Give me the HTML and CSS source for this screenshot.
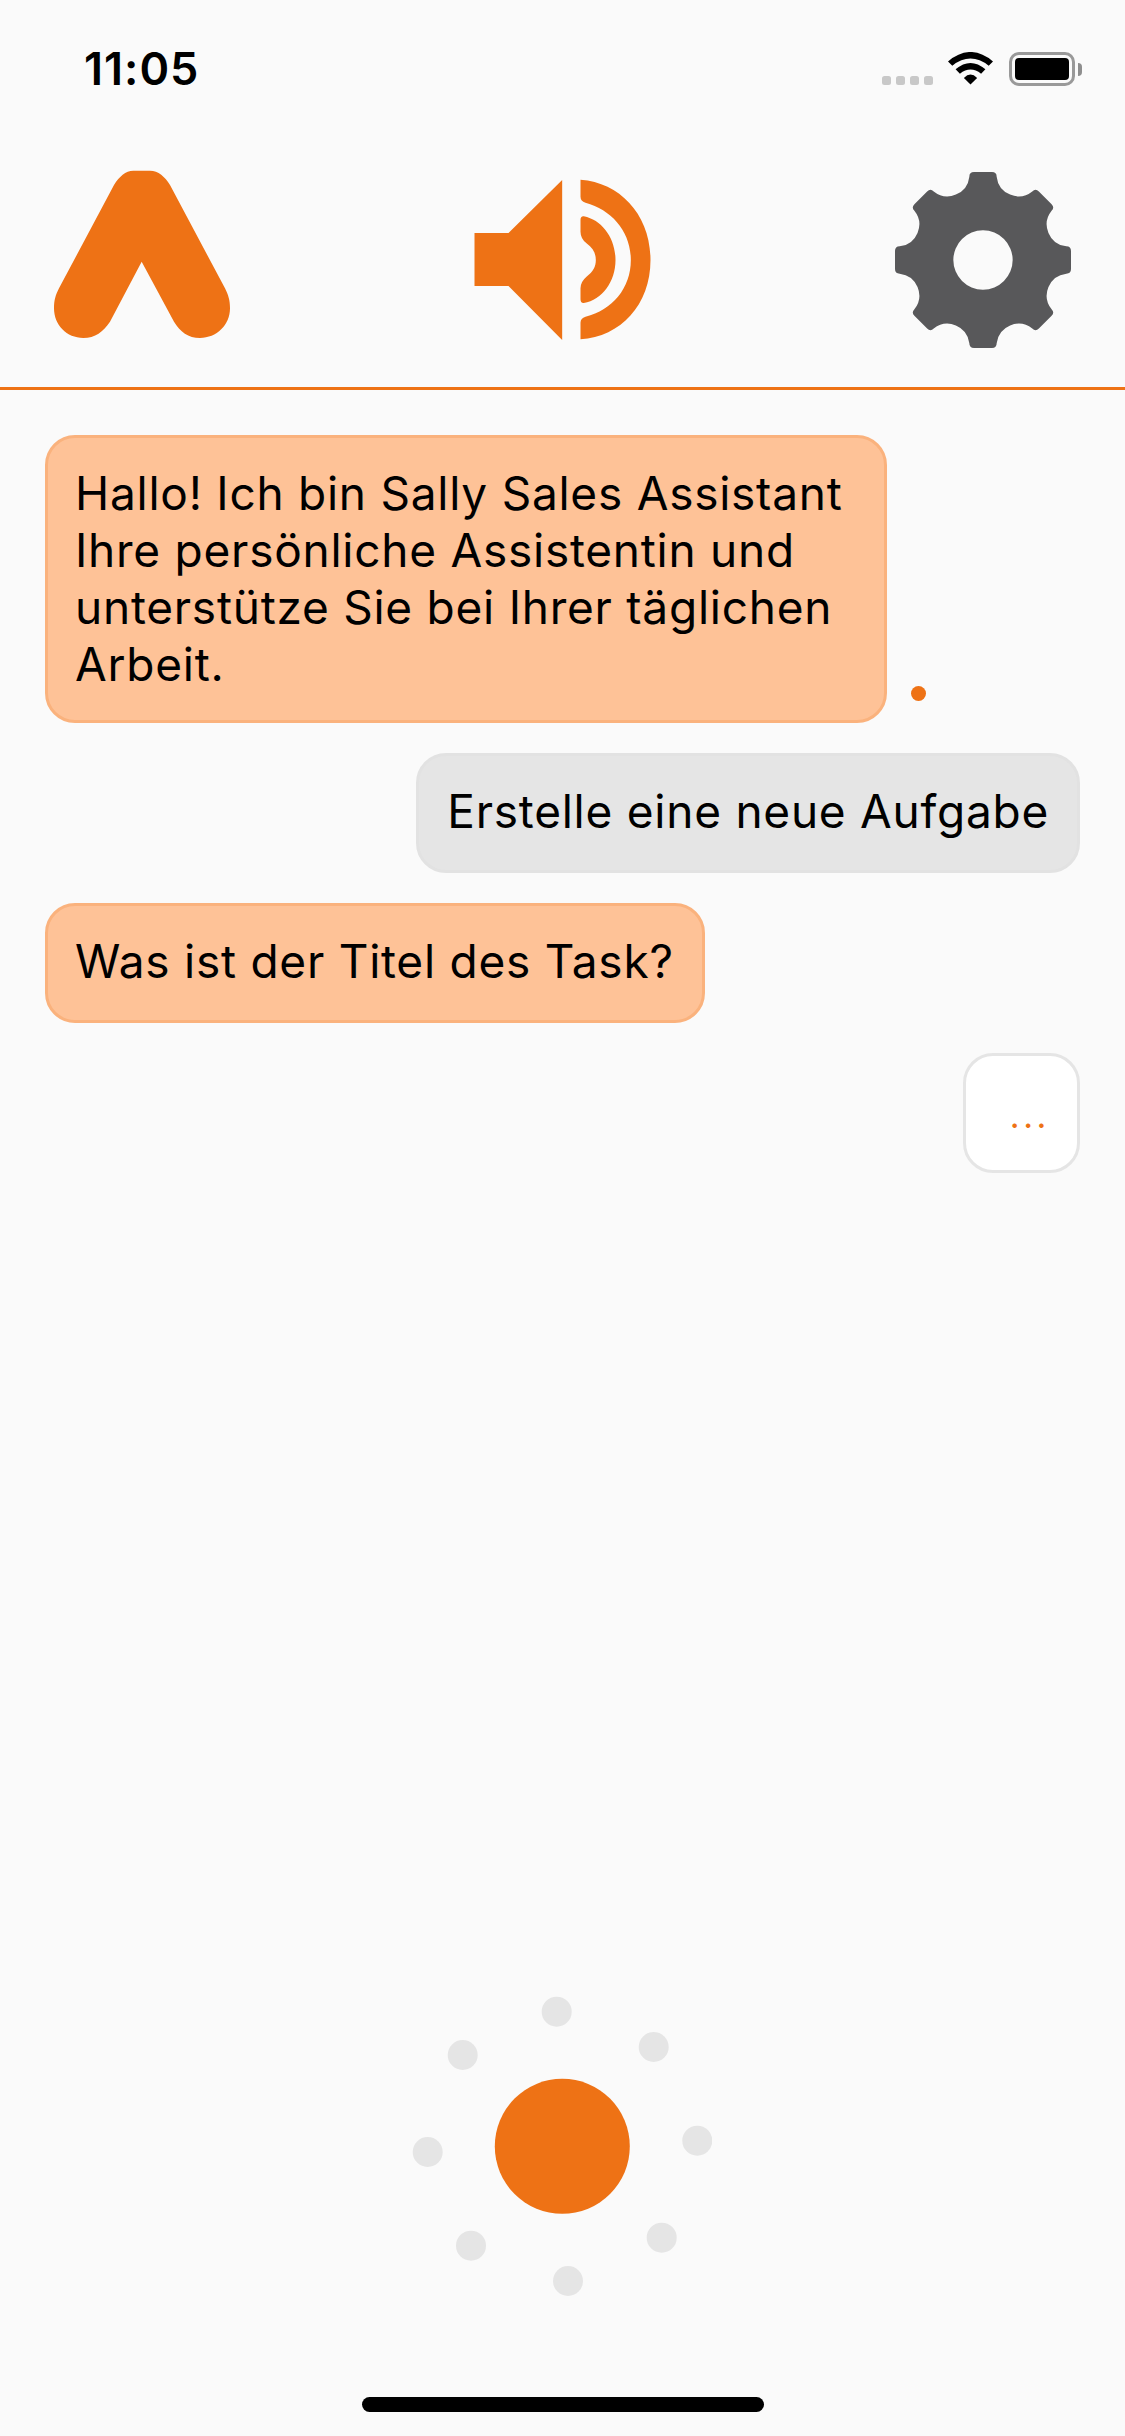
FILE: index.html
```html
<!DOCTYPE html>
<html lang="de">
<head>
<meta charset="utf-8">
<title>Sally Sales Assistant</title>
<link rel="stylesheet" href="styles.css">
</head>
<body>
<div class="app">
  <div class="status">
    <span class="time">11:05</span>
    <div class="status-icons">
      <div class="signal"><i></i><i></i><i></i><i></i></div>
      <svg class="wifi" viewBox="265 157 136 99"><path d="M265 185Q333 128 401 185L388 198Q333 155 278 198Z"/><path d="M288 209Q333 170 378 209L365 222Q333 197 301 222Z"/><path d="M313 235Q333 215 353 235L333 255Z"/></svg>
      <div class="battery"><div class="battery-body"><div class="battery-fill"></div></div><div class="battery-nub"></div></div>
    </div>
  </div>
  <header class="header">
    <svg class="icon orange" viewBox="162 516 528 528"><path d="M400 512L450 512C475 512 495 530 510 555L675 865C685 885 690 900 690 925C690 975 650 1014 600 1014C565 1014 540 995 522 965L425 785L330 965C310 995 285 1014 250 1014C200 1014 162 975 162 925C162 900 167 885 177 865L342 555C357 530 377 512 400 512Z"/></svg>
    <svg class="icon orange" viewBox="133.5 96 528 528"><path d="M132 279H234L395 120V600L234 438H132Z"/><path d="M450 119C570 128 660 225 660 360C660 495 570 590 450 598V548Q450 535 465 530C545 510 601 445 601 360C601 275 545 210 465 188Q450 183 450 170Z"/><path d="M450 240Q450 228 460 229C515 240 555 295 555 360C555 425 515 480 460 489Q450 490 450 478V445Q450 425 468 410C488 395 496 380 496 360C496 340 488 325 468 310Q450 295 450 275Z"/></svg>
    <svg class="icon gear" viewBox="-264 -264 528 528"><path fill-rule="evenodd" d="M-41 -250Q-41 -264 -27 -264L27 -264Q41 -264 41 -250A66 66 0 0 0 147.8 -205.8Q157.7 -215.6 167.6 -205.8L205.8 -167.6Q215.6 -157.7 205.8 -147.8A66 66 0 0 0 250 -41Q264 -41 264 -27L264 27Q264 41 250 41A66 66 0 0 0 205.8 147.8Q215.6 157.7 205.8 167.6L167.6 205.8Q157.7 215.6 147.8 205.8A66 66 0 0 0 41 250Q41 264 27 264L-27 264Q-41 264 -41 250A66 66 0 0 0 -147.8 205.8Q-157.7 215.6 -167.6 205.8L-205.8 167.6Q-215.6 157.7 -205.8 147.8A66 66 0 0 0 -250 41Q-264 41 -264 27L-264 -27Q-264 -41 -250 -41A66 66 0 0 0 -205.8 -147.8Q-215.6 -157.7 -205.8 -167.6L-167.6 -205.8Q-157.7 -215.6 -147.8 -205.8A66 66 0 0 0 -41 -250ZM-89 0a89 89 0 1 0 178 0a89 89 0 1 0 -178 0Z"/></svg>
  </header>
  <main class="chat">
    <div class="row">
      <div class="bubble bot wide">Hallo! Ich bin Sally Sales Assistant Ihre persönliche Assistentin und unterstütze Sie bei Ihrer täglichen Arbeit.</div>
      <span class="pulse"></span>
    </div>
    <div class="row end"><div class="bubble user">Erstelle eine neue Aufgabe</div></div>
    <div class="row"><div class="bubble bot">Was ist der Titel des Task?</div></div>
    <div class="row end"><div class="bubble typing"><span class="dots">...</span></div></div>
  </main>
  <svg class="spinner" viewBox="412 1996 300 300">
    <g class="halo">
      <circle cx="556.7" cy="2011.7" r="15"/><circle cx="653.7" cy="2047" r="15"/><circle cx="697.3" cy="2140.7" r="15"/><circle cx="661.7" cy="2237.7" r="15"/><circle cx="568" cy="2281" r="15"/><circle cx="471" cy="2245.7" r="15"/><circle cx="427.7" cy="2152" r="15"/><circle cx="462.7" cy="2055" r="15"/>
    </g>
    <circle class="core" cx="562.3" cy="2146.3" r="67.5"/>
  </svg>
  <div class="home"></div>
</div>
</body>
</html>
```
FILE: styles.css
```css
* { box-sizing: border-box; }
html, body { margin: 0; padding: 0; }
body { background: #fafafa; font-family: Inter, "Liberation Sans", sans-serif; color: #000; }
.app { width: 1125px; height: 2436px; display: flex; flex-direction: column; overflow: hidden; }

.status { height: 132px; padding: 52px 43px 0 84px; display: flex; justify-content: space-between; align-items: flex-start; }
.time { font-size: 45px; line-height: 34px; font-weight: 600; letter-spacing: 1px; }
.status-icons { display: flex; align-items: flex-end; height: 34px; }
.signal { display: flex; gap: 5px; margin-right: 15px; margin-bottom: 1px; }
.signal i { width: 9px; height: 9px; border-radius: 2.5px; background: #c8c8c8; }
.wifi { width: 45px; height: 33px; margin-right: 16px; margin-bottom: 1px; }
.battery { display: flex; align-items: center; }
.battery-body { width: 66px; height: 34px; border: 3px solid #999; border-radius: 10px; padding: 3px; }
.battery-fill { height: 100%; background: #000; border-radius: 4px; }
.battery-nub { width: 4px; height: 13px; margin-left: 3px; background: #8e8e8e; border-radius: 0 4px 4px 0; }

.header { height: 258px; padding: 40px 54px 0; border-bottom: 3px solid #ee7215; display: flex; justify-content: space-between; align-items: flex-start; }
.icon { width: 176px; height: 176px; overflow: visible; display: block; }
.orange { fill: #ee7215; }
.gear { fill: #58585a; }

.chat { flex: 1; padding: 45px 45px 0 45px; display: flex; flex-direction: column; gap: 30px; }
.row { display: flex; align-items: flex-end; }
.row.end { justify-content: flex-end; }
.bubble { min-height: 120px; padding: 27px 28px 27px 27px; border: 3px solid; border-radius: 30px; font-size: 46px; line-height: 57px; letter-spacing: 0.75px; }
.bot { background: #fec297; border-color: #fab27d; }
.user { background: #e5e5e5; border-color: #e2e2e2; padding-left: 28px; }
.wide { width: 842px; }
.pulse { width: 15px; height: 15px; margin: 0 0 22px 24px; border-radius: 50%; background: #ee7215; }
.typing { width: 117px; background: #fff; border-color: #e5e5e5; display: flex; justify-content: flex-end; padding: 0 27px 0 0; }
.dots { font-size: 34px; line-height: 34px; letter-spacing: 3.6px; color: #ee7215; margin-top: 43px; }

.spinner { width: 300px; height: 300px; margin: 0 0 101px 412px; display: block; flex: none; }
.halo { fill: #e5e5e5; }
.core { fill: #ee7215; }
.home { width: 402px; height: 15px; margin: 0 0 24px 362px; border-radius: 8px; background: #000; flex: none; }
```
